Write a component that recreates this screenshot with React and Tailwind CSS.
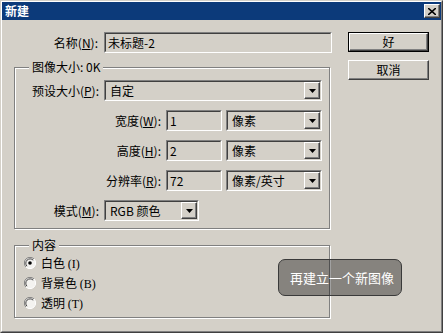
import React from "react";

const raised =
  "border border-t-white border-l-white border-r-[#404040] border-b-[#404040] shadow-[inset_-1px_-1px_0_#808080]";
const sunken =
  "border border-t-[#808080] border-l-[#808080] border-r-white border-b-white";
const sunkenInner =
  "border border-t-[#404040] border-l-[#404040] border-r-[#d4d0c8] border-b-[#d4d0c8]";

function Field({ width, children }) {
  return (
    <div className={`h-[21px] ${sunken} ${width}`}>
      <div className={`h-full ${sunkenInner} px-[2px] leading-[17px] text-black`}>
        {children}
      </div>
    </div>
  );
}

function Combo({ width, children }) {
  return (
    <div className={`h-[21px] ${sunken} ${width}`}>
      <div className={`h-full ${sunkenInner} flex items-center`}>
        <span className="flex-1 pl-[4px] leading-[17px]">{children}</span>
        <div className={`w-[16px] h-[17px] flex items-center justify-center ${raised}`}>
          <svg width="7" height="4" viewBox="0 0 7 4">
            <path d="M0 0h7L3.5 4z" fill="#000" />
          </svg>
        </div>
      </div>
    </div>
  );
}

function Button({ children, primary }) {
  const btn = (
    <div className={`h-full flex items-center justify-center ${raised}`}>{children}</div>
  );
  return primary ? (
    <div className="w-[81px] h-[20px] border border-black">{btn}</div>
  ) : (
    <div className="w-[81px] h-[20px]">{btn}</div>
  );
}

function Radio({ checked, label, hot }) {
  return (
    <div className="h-[20px] flex items-center">
      <svg width="12" height="12" viewBox="0 0 12 12" className="ml-[9px]">
        <circle cx="6" cy="6" r="5.5" fill="#f4f3f0" />
        <path d="M10 2A5.5 5.5 0 0 0 2 10" fill="none" stroke="#808080" strokeWidth="1" />
        <path d="M9.2 3.2A4.3 4.3 0 0 0 3 9.2" fill="none" stroke="#404040" strokeWidth="1" />
        <path d="M2 10A5.5 5.5 0 0 0 10 2" fill="none" stroke="#ffffff" strokeWidth="1" />
        {checked && <circle cx="6" cy="6" r="1.8" fill="#000" />}
      </svg>
      <span className="ml-[5px]">
        {label} <span className="font-['Liberation_Serif',serif]">({hot})</span>
      </span>
    </div>
  );
}

function Group({ title, className, children }) {
  return (
    <div
      className={`relative border border-[#808080] shadow-[inset_1px_1px_0_#fff,1px_1px_0_#fff] ${className}`}
    >
      <span className="absolute left-[14px] -top-[9px] px-[3px] bg-[#d4d0c8] leading-[16px]">
        {title}
      </span>
      {children}
    </div>
  );
}

export default function App() {
  return (
    <div className="relative w-[443px] h-[333px] bg-[#d4d0c8] text-[12px] text-black font-['Noto_Sans_CJK_SC','Liberation_Sans',sans-serif] border border-t-[#d4d0c8] border-l-[#d4d0c8] border-r-[#404040] border-b-[#404040]">
      <div className="h-full border border-t-white border-l-white border-r-[#808080] border-b-[#808080] flex flex-col">
        {/* Title bar */}
        <div className="h-[18px] bg-[#0c3a7a] flex items-center justify-between pl-[3px] pr-[1px]">
          <span className="text-white font-bold leading-none">新建</span>
          <div className={`w-[16px] h-[14px] bg-[#d4d0c8] flex items-center justify-center ${raised}`}>
            <svg width="8" height="7" viewBox="0 0 8 7">
              <path d="M0 0L8 7M8 0L0 7" stroke="#000" strokeWidth="1.6" />
            </svg>
          </div>
        </div>

        <div className="flex pl-[12px] pt-[12px]">
          {/* Left column */}
          <div className="w-[318px] flex flex-col">
            <div className="flex items-center">
              <span className="w-[84px] text-right">
                名称(<span className="underline">N</span>):
              </span>
              <div className="ml-[6px]">
                <Field width="w-[228px]">未标题-2</Field>
              </div>
            </div>

            <Group title="图像大小: 0K" className="mt-[14px] w-[316px] h-[162px]">
              <div className="pt-[12px] flex flex-col gap-[9px]">
                <div className="flex items-center">
                  <span className="w-[84px] text-right">
                    预设大小(<span className="underline">P</span>):
                  </span>
                  <div className="ml-[5px]">
                    <Combo width="w-[218px]">自定</Combo>
                  </div>
                </div>
                {[
                  ["宽度", "W", "1", "像素"],
                  ["高度", "H", "2", "像素"],
                  ["分辨率", "R", "72", "像素/英寸"],
                ].map(([l, k, v, u]) => (
                  <div key={k} className="flex items-center">
                    <span className="w-[146px] text-right">
                      {l}(<span className="underline">{k}</span>):
                    </span>
                    <div className="ml-[5px]">
                      <Field width="w-[56px]">{v}</Field>
                    </div>
                    <div className="ml-[4px]">
                      <Combo width="w-[96px]">{u}</Combo>
                    </div>
                  </div>
                ))}
                <div className="flex items-center">
                  <span className="w-[84px] text-right">
                    模式(<span className="underline">M</span>):
                  </span>
                  <div className="ml-[5px]">
                    <Combo width="w-[95px]">RGB 颜色</Combo>
                  </div>
                </div>
              </div>
            </Group>

            <Group title="内容" className="mt-[16px] w-[316px] h-[73px]">
              <div className="pt-[7px] flex flex-col">
                <Radio checked label="白色" hot="I" />
                <Radio label="背景色" hot="B" />
                <Radio label="透明" hot="T" />
              </div>
            </Group>
          </div>

          {/* Right column */}
          <div className="ml-[16px] flex flex-col gap-[8px]">
            <Button primary>好</Button>
            <Button>取消</Button>
          </div>
        </div>
      </div>

      {/* Tooltip overlay */}
      <div className="absolute left-[277px] top-[258px] w-[124px] h-[37px] rounded-[7px] border border-[#3a3a3a] bg-black/[0.37] flex items-center pl-[11px] text-white text-[13px]">
        再建立一个新图像
      </div>
    </div>
  );
}
